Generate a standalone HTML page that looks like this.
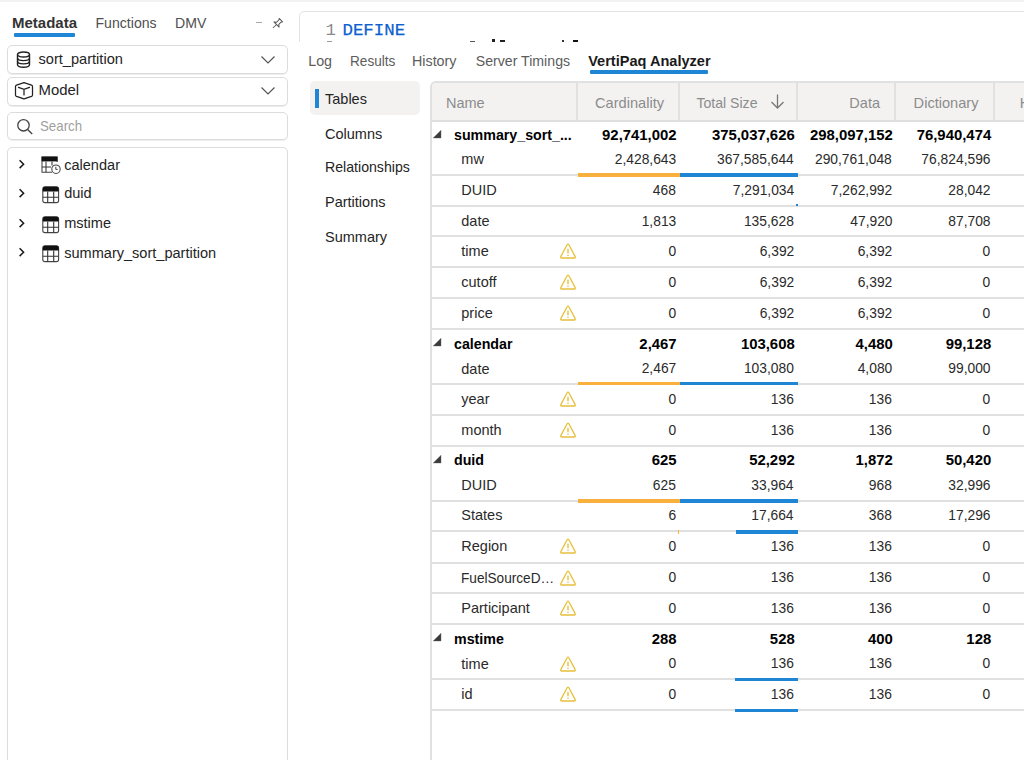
<!DOCTYPE html><html><head><meta charset="utf-8"><style>
html,body{margin:0;padding:0;background:#fff;width:1024px;height:760px;overflow:hidden;position:relative}
.t{position:absolute;white-space:nowrap;font-family:"Liberation Sans",sans-serif}
.r{position:absolute}
svg{position:absolute}
</style></head><body>
<div class="r" style="left:0px;top:0px;width:1024px;height:2px;background:#f3f2f1;"></div>
<div class="t" style="left:12.00px;top:12.80px;font-size:15px;line-height:20px;font-weight:bold;color:#333333;font-family:'Liberation Sans', sans-serif;">Metadata</div>
<div class="r" style="left:14px;top:33px;width:61px;height:3.6px;background:#1f86d6;border-radius:1px"></div>
<div class="t" style="left:95.50px;top:13.11px;font-size:14.1px;line-height:20px;font-weight:normal;color:#505050;font-family:'Liberation Sans', sans-serif;">Functions</div>
<div class="t" style="left:175.00px;top:13.11px;font-size:14.1px;line-height:20px;font-weight:normal;color:#505050;font-family:'Liberation Sans', sans-serif;">DMV</div>
<div class="r" style="left:256px;top:22px;width:6px;height:1px;background:#a8a8a8;"></div>
<svg style="left:268.5px;top:16.3px" width="16" height="16" viewBox="0 0 16 16"><g transform="rotate(45 8 8) translate(8 8) scale(0.86) translate(-8 -8)"><path d="M5.2 1.6 H10.8 L9.8 3.2 V6.8 L12.2 8.8 H3.8 L6.2 6.8 V3.2 Z" fill="none" stroke="#555" stroke-width="1.15" stroke-linejoin="round"/><path d="M8 8.8 V14.6" stroke="#555" stroke-width="1.1"/></g></svg>
<div class="r" style="left:7px;top:45px;width:281px;height:29px;border:1px solid #dcdcdc;border-radius:5px;box-sizing:border-box;box-shadow:0 1px 0 #ededed;"></div>
<div class="r" style="left:7px;top:77px;width:281px;height:29px;border:1px solid #dcdcdc;border-radius:5px;box-sizing:border-box;box-shadow:0 1px 0 #ededed;"></div>
<div class="r" style="left:7px;top:112px;width:281px;height:28px;border:1px solid #dcdcdc;border-radius:5px;box-sizing:border-box;box-shadow:0 1px 0 #ededed;"></div>
<div class="r" style="left:7px;top:147px;width:281px;height:640px;border:1px solid #dcdcdc;border-radius:5px;box-sizing:border-box;box-shadow:0 1px 0 #ededed;"></div>
<svg style="left:260px;top:54.5px" width="16" height="10" viewBox="0 0 16 10"><path d="M1.5 1.5 L8 8 L14.5 1.5" fill="none" stroke="#555" stroke-width="1.2"/></svg>
<svg style="left:260px;top:86px" width="16" height="10" viewBox="0 0 16 10"><path d="M1.5 1.5 L8 8 L14.5 1.5" fill="none" stroke="#555" stroke-width="1.2"/></svg>
<svg style="left:16px;top:50.6px" width="16" height="18" viewBox="0 0 16 18"><ellipse cx="7.5" cy="3.5" rx="6" ry="2.5" fill="none" stroke="#222" stroke-width="1.4"/><path d="M1.5 3.5 V13.5 C1.5 15 4 16.2 7.5 16.2 C11 16.2 13.5 15 13.5 13.5 V3.5" fill="none" stroke="#222" stroke-width="1.4"/><path d="M1.5 7 C1.5 8.5 4 9.6 7.5 9.6 C11 9.6 13.5 8.5 13.5 7" fill="none" stroke="#222" stroke-width="1.4"/><path d="M1.5 10.3 C1.5 11.8 4 12.9 7.5 12.9 C11 12.9 13.5 11.8 13.5 10.3" fill="none" stroke="#222" stroke-width="1.4"/></svg>
<div class="t" style="left:38.50px;top:49.14px;font-size:14.6px;line-height:20px;font-weight:normal;color:#242424;font-family:'Liberation Sans', sans-serif;">sort_partition</div>
<svg style="left:10px;top:76px" width="30" height="28" viewBox="0 0 30 28"><path d="M14 6.6 L21.5 9.2 Q22.5 9.6 22.5 10.6 V19 Q22.5 20 21.5 20.4 L14.8 22.7 Q14 23 13.2 22.7 L6.5 20.4 Q5.5 20 5.5 19 V10.6 Q5.5 9.6 6.5 9.2 Z" fill="none" stroke="#222" stroke-width="1.25" stroke-linejoin="round"/><path d="M8.5 11.3 L14 13.4 L19.5 11.3 M14 13.4 V18.9" fill="none" stroke="#222" stroke-width="1.25" stroke-linecap="round"/></svg>
<div class="t" style="left:38.50px;top:80.44px;font-size:14.9px;line-height:20px;font-weight:normal;color:#242424;font-family:'Liberation Sans', sans-serif;">Model</div>
<svg style="left:16px;top:118px" width="18" height="18" viewBox="0 0 18 18"><circle cx="7.5" cy="7.3" r="5.7" fill="none" stroke="#444" stroke-width="1.3"/><path d="M11.6 11.5 L16.2 16" stroke="#444" stroke-width="1.4"/></svg>
<div class="t" style="left:39.60px;top:116.05px;font-size:14.3px;line-height:20px;font-weight:normal;color:#a0a0a0;font-family:'Liberation Sans', sans-serif;transform:scaleX(0.93);transform-origin:left center;">Search</div>
<svg style="left:17px;top:159.2px" width="10" height="11" viewBox="0 0 10 11"><path d="M2.6 1.3 L6.6 5.2 L2.6 9.1" fill="none" stroke="#1a1a1a" stroke-width="1.5"/></svg>
<svg style="left:40.6px;top:155.5px" width="22" height="20" viewBox="0 0 22 20"><path d="M11 16.2 H1 V1 H16.2 V6" fill="none" stroke="#444" stroke-width="1.05"/><rect x="0.6" y="0.6" width="15.8" height="4.8" fill="#111"/><path d="M0.8 11 H10 M5 5.4 V16.2 M11 5.4 V9.5" stroke="#333" stroke-width="1.05"/><circle cx="15" cy="13.2" r="4.2" fill="#fff" stroke="#444" stroke-width="1.05"/><path d="M14.8 10.8 V13.4 H16.6" fill="none" stroke="#444" stroke-width="1"/></svg>
<div class="t" style="left:64.20px;top:154.66px;font-size:14.55px;line-height:20px;font-weight:normal;color:#242424;font-family:'Liberation Sans', sans-serif;">calendar</div>
<svg style="left:17px;top:188.0px" width="10" height="11" viewBox="0 0 10 11"><path d="M2.6 1.3 L6.6 5.2 L2.6 9.1" fill="none" stroke="#1a1a1a" stroke-width="1.5"/></svg>
<svg style="left:41.8px;top:185.7px" width="18" height="18" viewBox="0 0 18 18"><rect x="0.8" y="0.8" width="15.8" height="15.8" rx="2.2" fill="none" stroke="#444" stroke-width="1.1"/><path d="M0.8 3 Q0.8 0.8 3 0.8 H14.4 Q16.6 0.8 16.6 3 V5.6 H0.8 Z" fill="#111"/><path d="M0.8 11.2 H16.6 M5.7 5.6 V16.6 M11.7 5.6 V16.6" stroke="#333" stroke-width="1.1"/></svg>
<div class="t" style="left:64.20px;top:183.46px;font-size:14.55px;line-height:20px;font-weight:normal;color:#242424;font-family:'Liberation Sans', sans-serif;">duid</div>
<svg style="left:17px;top:217.8px" width="10" height="11" viewBox="0 0 10 11"><path d="M2.6 1.3 L6.6 5.2 L2.6 9.1" fill="none" stroke="#1a1a1a" stroke-width="1.5"/></svg>
<svg style="left:41.8px;top:215.5px" width="18" height="18" viewBox="0 0 18 18"><rect x="0.8" y="0.8" width="15.8" height="15.8" rx="2.2" fill="none" stroke="#444" stroke-width="1.1"/><path d="M0.8 3 Q0.8 0.8 3 0.8 H14.4 Q16.6 0.8 16.6 3 V5.6 H0.8 Z" fill="#111"/><path d="M0.8 11.2 H16.6 M5.7 5.6 V16.6 M11.7 5.6 V16.6" stroke="#333" stroke-width="1.1"/></svg>
<div class="t" style="left:64.20px;top:213.26px;font-size:14.55px;line-height:20px;font-weight:normal;color:#242424;font-family:'Liberation Sans', sans-serif;">mstime</div>
<svg style="left:17px;top:247.2px" width="10" height="11" viewBox="0 0 10 11"><path d="M2.6 1.3 L6.6 5.2 L2.6 9.1" fill="none" stroke="#1a1a1a" stroke-width="1.5"/></svg>
<svg style="left:41.8px;top:244.89999999999998px" width="18" height="18" viewBox="0 0 18 18"><rect x="0.8" y="0.8" width="15.8" height="15.8" rx="2.2" fill="none" stroke="#444" stroke-width="1.1"/><path d="M0.8 3 Q0.8 0.8 3 0.8 H14.4 Q16.6 0.8 16.6 3 V5.6 H0.8 Z" fill="#111"/><path d="M0.8 11.2 H16.6 M5.7 5.6 V16.6 M11.7 5.6 V16.6" stroke="#333" stroke-width="1.1"/></svg>
<div class="t" style="left:64.20px;top:242.66px;font-size:14.55px;line-height:20px;font-weight:normal;color:#242424;font-family:'Liberation Sans', sans-serif;">summary_sort_partition</div>
<div class="r" style="left:299px;top:11px;width:760px;height:60px;border:1px solid #e3e3e3;border-radius:5px;box-sizing:border-box"></div>
<div class="r" style="left:290px;top:42px;width:734px;height:718px;background:#fff;"></div>
<div class="t" style="left:325.50px;top:21.27px;font-size:17.4px;line-height:20px;font-weight:normal;color:#8a8a8a;font-family:'Liberation Mono', monospace;">1</div>
<div class="t" style="left:342.50px;top:21.27px;font-size:17.4px;line-height:20px;font-weight:normal;color:#0d5fd0;font-family:'Liberation Mono', monospace;-webkit-text-stroke:0.25px #0d5fd0;">DEFINE</div>
<div class="r" style="left:327px;top:41px;width:5px;height:1px;background:#9a9a9a;"></div>
<div class="r" style="left:470px;top:41px;width:5px;height:1px;background:#555;"></div>
<div class="r" style="left:492px;top:39px;width:3px;height:3px;background:#222;"></div>
<div class="r" style="left:500px;top:40px;width:5px;height:2px;background:#222;"></div>
<div class="r" style="left:561.5px;top:40px;width:2px;height:2px;background:#333;"></div>
<div class="r" style="left:573px;top:40px;width:5px;height:2px;background:#111;"></div>
<div class="t" style="left:308.20px;top:51.45px;font-size:14.3px;line-height:20px;font-weight:normal;color:#5c5c5c;font-family:'Liberation Sans', sans-serif;">Log</div>
<div class="t" style="left:349.50px;top:51.41px;font-size:14.4px;line-height:20px;font-weight:normal;color:#5c5c5c;font-family:'Liberation Sans', sans-serif;transform:scaleX(0.945);transform-origin:left center;">Results</div>
<div class="t" style="left:412.00px;top:51.45px;font-size:14.3px;line-height:20px;font-weight:normal;color:#5c5c5c;font-family:'Liberation Sans', sans-serif;">History</div>
<div class="t" style="left:475.70px;top:51.49px;font-size:14.16px;line-height:20px;font-weight:normal;color:#5c5c5c;font-family:'Liberation Sans', sans-serif;">Server Timings</div>
<div class="t" style="left:588.20px;top:51.35px;font-size:14.56px;line-height:20px;font-weight:bold;color:#1a1a1a;font-family:'Liberation Sans', sans-serif;">VertiPaq Analyzer</div>
<div class="r" style="left:590px;top:70px;width:118px;height:3.6px;background:#1f86d6;border-radius:1px"></div>
<div class="r" style="left:310px;top:81px;width:110px;height:34px;background:#f3f2f1;border-radius:5px"></div>
<div class="r" style="left:315px;top:88.5px;width:3.5px;height:19px;background:#1f86d6;"></div>
<div class="t" style="left:325.00px;top:88.98px;font-size:14.5px;line-height:20px;font-weight:normal;color:#242424;font-family:'Liberation Sans', sans-serif;">Tables</div>
<div class="t" style="left:325.00px;top:123.58px;font-size:14.5px;line-height:20px;font-weight:normal;color:#242424;font-family:'Liberation Sans', sans-serif;">Columns</div>
<div class="t" style="left:325.00px;top:157.48px;font-size:14.5px;line-height:20px;font-weight:normal;color:#242424;font-family:'Liberation Sans', sans-serif;transform:scaleX(0.975);transform-origin:left center;">Relationships</div>
<div class="t" style="left:325.00px;top:192.18px;font-size:14.5px;line-height:20px;font-weight:normal;color:#242424;font-family:'Liberation Sans', sans-serif;">Partitions</div>
<div class="t" style="left:325.00px;top:226.78px;font-size:14.5px;line-height:20px;font-weight:normal;color:#242424;font-family:'Liberation Sans', sans-serif;">Summary</div>
<div class="r" style="left:430px;top:81px;width:700px;height:800px;border:2px solid #e1e1e1;border-radius:6px;box-sizing:border-box;background:#fff"></div>
<div class="r" style="left:432px;top:83px;width:600px;height:37px;background:#f3f2f1;border-top-left-radius:4px"></div>
<div class="r" style="left:432px;top:120px;width:600px;height:2px;background:#dedede;"></div>
<div class="r" style="left:576px;top:83px;width:2px;height:37px;background:#e2e1e0;"></div>
<div class="r" style="left:678px;top:83px;width:2px;height:37px;background:#e2e1e0;"></div>
<div class="r" style="left:796px;top:83px;width:2px;height:37px;background:#e2e1e0;"></div>
<div class="r" style="left:894px;top:83px;width:2px;height:37px;background:#e2e1e0;"></div>
<div class="r" style="left:993px;top:83px;width:2px;height:37px;background:#e2e1e0;"></div>
<div class="t" style="left:446.00px;top:92.98px;font-size:14.5px;line-height:20px;font-weight:normal;color:#8c8c8c;font-family:'Liberation Sans', sans-serif;">Name</div>
<div class="t" style="right:360.00px;top:92.94px;font-size:14.6px;line-height:20px;font-weight:normal;color:#8c8c8c;font-family:'Liberation Sans', sans-serif;text-align:right;">Cardinality</div>
<div class="t" style="right:266.50px;top:93.11px;font-size:14.1px;line-height:20px;font-weight:normal;color:#8c8c8c;font-family:'Liberation Sans', sans-serif;text-align:right;">Total Size</div>
<svg style="left:769px;top:93px" width="17" height="17" viewBox="0 0 17 17"><path d="M8.5 1.5 V15 M2.5 9 L8.5 15 L14.5 9" fill="none" stroke="#777" stroke-width="1.3"/></svg>
<div class="t" style="right:144.00px;top:92.98px;font-size:14.5px;line-height:20px;font-weight:normal;color:#8c8c8c;font-family:'Liberation Sans', sans-serif;text-align:right;">Data</div>
<div class="t" style="right:45.50px;top:92.94px;font-size:14.6px;line-height:20px;font-weight:normal;color:#8c8c8c;font-family:'Liberation Sans', sans-serif;text-align:right;">Dictionary</div>
<div class="t" style="left:1019.70px;top:92.98px;font-size:14.5px;line-height:20px;font-weight:normal;color:#8c8c8c;font-family:'Liberation Sans', sans-serif;">H</div>
<svg style="left:432px;top:128.5px" width="10" height="10" viewBox="0 0 10 10"><path d="M9 1.2 L9 9 L1.2 9 Z" fill="#3a3a3a" stroke="#666" stroke-width="0.4" stroke-linejoin="round"/></svg>
<div class="t" style="left:453.90px;top:124.54px;font-size:14.9px;line-height:20px;font-weight:bold;color:#000;font-family:'Liberation Sans', sans-serif;transform:scaleX(0.955);transform-origin:left center;">summary_sort_...</div>
<div class="t" style="right:347.40px;top:124.54px;font-size:14.9px;line-height:20px;font-weight:bold;color:#000;font-family:'Liberation Sans', sans-serif;text-align:right;">92,741,002</div>
<div class="t" style="right:229.30px;top:124.54px;font-size:14.9px;line-height:20px;font-weight:bold;color:#000;font-family:'Liberation Sans', sans-serif;text-align:right;">375,037,626</div>
<div class="t" style="right:131.20px;top:124.54px;font-size:14.9px;line-height:20px;font-weight:bold;color:#000;font-family:'Liberation Sans', sans-serif;text-align:right;">298,097,152</div>
<div class="t" style="right:32.80px;top:124.54px;font-size:14.9px;line-height:20px;font-weight:bold;color:#000;font-family:'Liberation Sans', sans-serif;text-align:right;">76,940,474</div>
<div class="t" style="left:461.30px;top:149.48px;font-size:14.5px;line-height:20px;font-weight:normal;color:#2a2a2a;font-family:'Liberation Sans', sans-serif;">mw</div>
<div class="t" style="right:348.10px;top:149.34px;font-size:14.9px;line-height:20px;font-weight:normal;color:#2a2a2a;font-family:'Liberation Sans', sans-serif;text-align:right;transform:scaleX(0.928);transform-origin:right center;">2,428,643</div>
<div class="t" style="right:230.00px;top:149.34px;font-size:14.9px;line-height:20px;font-weight:normal;color:#2a2a2a;font-family:'Liberation Sans', sans-serif;text-align:right;transform:scaleX(0.928);transform-origin:right center;">367,585,644</div>
<div class="t" style="right:131.90px;top:149.34px;font-size:14.9px;line-height:20px;font-weight:normal;color:#2a2a2a;font-family:'Liberation Sans', sans-serif;text-align:right;transform:scaleX(0.928);transform-origin:right center;">290,761,048</div>
<div class="t" style="right:33.50px;top:149.34px;font-size:14.9px;line-height:20px;font-weight:normal;color:#2a2a2a;font-family:'Liberation Sans', sans-serif;text-align:right;transform:scaleX(0.928);transform-origin:right center;">76,824,596</div>
<div class="r" style="left:432px;top:174px;width:600px;height:2px;background:#e0e0e0;"></div>
<div class="t" style="left:461.30px;top:179.68px;font-size:14.5px;line-height:20px;font-weight:normal;color:#2a2a2a;font-family:'Liberation Sans', sans-serif;">DUID</div>
<div class="t" style="right:348.10px;top:179.54px;font-size:14.9px;line-height:20px;font-weight:normal;color:#2a2a2a;font-family:'Liberation Sans', sans-serif;text-align:right;transform:scaleX(0.928);transform-origin:right center;">468</div>
<div class="t" style="right:230.00px;top:179.54px;font-size:14.9px;line-height:20px;font-weight:normal;color:#2a2a2a;font-family:'Liberation Sans', sans-serif;text-align:right;transform:scaleX(0.928);transform-origin:right center;">7,291,034</div>
<div class="t" style="right:131.90px;top:179.54px;font-size:14.9px;line-height:20px;font-weight:normal;color:#2a2a2a;font-family:'Liberation Sans', sans-serif;text-align:right;transform:scaleX(0.928);transform-origin:right center;">7,262,992</div>
<div class="t" style="right:33.50px;top:179.54px;font-size:14.9px;line-height:20px;font-weight:normal;color:#2a2a2a;font-family:'Liberation Sans', sans-serif;text-align:right;transform:scaleX(0.928);transform-origin:right center;">28,042</div>
<div class="r" style="left:432px;top:205px;width:600px;height:2px;background:#e0e0e0;"></div>
<div class="t" style="left:461.30px;top:210.68px;font-size:14.5px;line-height:20px;font-weight:normal;color:#2a2a2a;font-family:'Liberation Sans', sans-serif;">date</div>
<div class="t" style="right:348.10px;top:210.54px;font-size:14.9px;line-height:20px;font-weight:normal;color:#2a2a2a;font-family:'Liberation Sans', sans-serif;text-align:right;transform:scaleX(0.928);transform-origin:right center;">1,813</div>
<div class="t" style="right:230.00px;top:210.54px;font-size:14.9px;line-height:20px;font-weight:normal;color:#2a2a2a;font-family:'Liberation Sans', sans-serif;text-align:right;transform:scaleX(0.928);transform-origin:right center;">135,628</div>
<div class="t" style="right:131.90px;top:210.54px;font-size:14.9px;line-height:20px;font-weight:normal;color:#2a2a2a;font-family:'Liberation Sans', sans-serif;text-align:right;transform:scaleX(0.928);transform-origin:right center;">47,920</div>
<div class="t" style="right:33.50px;top:210.54px;font-size:14.9px;line-height:20px;font-weight:normal;color:#2a2a2a;font-family:'Liberation Sans', sans-serif;text-align:right;transform:scaleX(0.928);transform-origin:right center;">87,708</div>
<div class="r" style="left:432px;top:235px;width:600px;height:2px;background:#e0e0e0;"></div>
<div class="t" style="left:461.30px;top:241.18px;font-size:14.5px;line-height:20px;font-weight:normal;color:#2a2a2a;font-family:'Liberation Sans', sans-serif;">time</div>
<svg style="left:559px;top:242px" width="18" height="18" viewBox="0 0 18 18"><path d="M9 2.2 C8.6 2.2 8.3 2.4 8.1 2.8 L1.8 14.6 C1.4 15.3 1.9 16 2.6 16 H15.4 C16.1 16 16.6 15.3 16.2 14.6 L9.9 2.8 C9.7 2.4 9.4 2.2 9 2.2 Z" fill="none" stroke="#e6c03c" stroke-width="1.3"/><path d="M9 6.8 V11.3" stroke="#e6c03c" stroke-width="1.4"/><circle cx="9" cy="13.3" r="0.8" fill="#e6c03c"/></svg>
<div class="t" style="right:348.10px;top:241.04px;font-size:14.9px;line-height:20px;font-weight:normal;color:#2a2a2a;font-family:'Liberation Sans', sans-serif;text-align:right;transform:scaleX(0.928);transform-origin:right center;">0</div>
<div class="t" style="right:230.00px;top:241.04px;font-size:14.9px;line-height:20px;font-weight:normal;color:#2a2a2a;font-family:'Liberation Sans', sans-serif;text-align:right;transform:scaleX(0.928);transform-origin:right center;">6,392</div>
<div class="t" style="right:131.90px;top:241.04px;font-size:14.9px;line-height:20px;font-weight:normal;color:#2a2a2a;font-family:'Liberation Sans', sans-serif;text-align:right;transform:scaleX(0.928);transform-origin:right center;">6,392</div>
<div class="t" style="right:33.50px;top:241.04px;font-size:14.9px;line-height:20px;font-weight:normal;color:#2a2a2a;font-family:'Liberation Sans', sans-serif;text-align:right;transform:scaleX(0.928);transform-origin:right center;">0</div>
<div class="r" style="left:432px;top:266px;width:600px;height:2px;background:#e0e0e0;"></div>
<div class="t" style="left:461.30px;top:272.18px;font-size:14.5px;line-height:20px;font-weight:normal;color:#2a2a2a;font-family:'Liberation Sans', sans-serif;">cutoff</div>
<svg style="left:559px;top:273px" width="18" height="18" viewBox="0 0 18 18"><path d="M9 2.2 C8.6 2.2 8.3 2.4 8.1 2.8 L1.8 14.6 C1.4 15.3 1.9 16 2.6 16 H15.4 C16.1 16 16.6 15.3 16.2 14.6 L9.9 2.8 C9.7 2.4 9.4 2.2 9 2.2 Z" fill="none" stroke="#e6c03c" stroke-width="1.3"/><path d="M9 6.8 V11.3" stroke="#e6c03c" stroke-width="1.4"/><circle cx="9" cy="13.3" r="0.8" fill="#e6c03c"/></svg>
<div class="t" style="right:348.10px;top:272.04px;font-size:14.9px;line-height:20px;font-weight:normal;color:#2a2a2a;font-family:'Liberation Sans', sans-serif;text-align:right;transform:scaleX(0.928);transform-origin:right center;">0</div>
<div class="t" style="right:230.00px;top:272.04px;font-size:14.9px;line-height:20px;font-weight:normal;color:#2a2a2a;font-family:'Liberation Sans', sans-serif;text-align:right;transform:scaleX(0.928);transform-origin:right center;">6,392</div>
<div class="t" style="right:131.90px;top:272.04px;font-size:14.9px;line-height:20px;font-weight:normal;color:#2a2a2a;font-family:'Liberation Sans', sans-serif;text-align:right;transform:scaleX(0.928);transform-origin:right center;">6,392</div>
<div class="t" style="right:33.50px;top:272.04px;font-size:14.9px;line-height:20px;font-weight:normal;color:#2a2a2a;font-family:'Liberation Sans', sans-serif;text-align:right;transform:scaleX(0.928);transform-origin:right center;">0</div>
<div class="r" style="left:432px;top:297px;width:600px;height:2px;background:#e0e0e0;"></div>
<div class="t" style="left:461.30px;top:302.78px;font-size:14.5px;line-height:20px;font-weight:normal;color:#2a2a2a;font-family:'Liberation Sans', sans-serif;">price</div>
<svg style="left:559px;top:303.6px" width="18" height="18" viewBox="0 0 18 18"><path d="M9 2.2 C8.6 2.2 8.3 2.4 8.1 2.8 L1.8 14.6 C1.4 15.3 1.9 16 2.6 16 H15.4 C16.1 16 16.6 15.3 16.2 14.6 L9.9 2.8 C9.7 2.4 9.4 2.2 9 2.2 Z" fill="none" stroke="#e6c03c" stroke-width="1.3"/><path d="M9 6.8 V11.3" stroke="#e6c03c" stroke-width="1.4"/><circle cx="9" cy="13.3" r="0.8" fill="#e6c03c"/></svg>
<div class="t" style="right:348.10px;top:302.64px;font-size:14.9px;line-height:20px;font-weight:normal;color:#2a2a2a;font-family:'Liberation Sans', sans-serif;text-align:right;transform:scaleX(0.928);transform-origin:right center;">0</div>
<div class="t" style="right:230.00px;top:302.64px;font-size:14.9px;line-height:20px;font-weight:normal;color:#2a2a2a;font-family:'Liberation Sans', sans-serif;text-align:right;transform:scaleX(0.928);transform-origin:right center;">6,392</div>
<div class="t" style="right:131.90px;top:302.64px;font-size:14.9px;line-height:20px;font-weight:normal;color:#2a2a2a;font-family:'Liberation Sans', sans-serif;text-align:right;transform:scaleX(0.928);transform-origin:right center;">6,392</div>
<div class="t" style="right:33.50px;top:302.64px;font-size:14.9px;line-height:20px;font-weight:normal;color:#2a2a2a;font-family:'Liberation Sans', sans-serif;text-align:right;transform:scaleX(0.928);transform-origin:right center;">0</div>
<div class="r" style="left:432px;top:328px;width:600px;height:2px;background:#e0e0e0;"></div>
<svg style="left:432px;top:337px" width="10" height="10" viewBox="0 0 10 10"><path d="M9 1.2 L9 9 L1.2 9 Z" fill="#3a3a3a" stroke="#666" stroke-width="0.4" stroke-linejoin="round"/></svg>
<div class="t" style="left:453.90px;top:333.74px;font-size:14.9px;line-height:20px;font-weight:bold;color:#000;font-family:'Liberation Sans', sans-serif;transform:scaleX(0.955);transform-origin:left center;">calendar</div>
<div class="t" style="right:347.40px;top:333.74px;font-size:14.9px;line-height:20px;font-weight:bold;color:#000;font-family:'Liberation Sans', sans-serif;text-align:right;">2,467</div>
<div class="t" style="right:229.30px;top:333.74px;font-size:14.9px;line-height:20px;font-weight:bold;color:#000;font-family:'Liberation Sans', sans-serif;text-align:right;">103,608</div>
<div class="t" style="right:131.20px;top:333.74px;font-size:14.9px;line-height:20px;font-weight:bold;color:#000;font-family:'Liberation Sans', sans-serif;text-align:right;">4,480</div>
<div class="t" style="right:32.80px;top:333.74px;font-size:14.9px;line-height:20px;font-weight:bold;color:#000;font-family:'Liberation Sans', sans-serif;text-align:right;">99,128</div>
<div class="t" style="left:461.30px;top:358.58px;font-size:14.5px;line-height:20px;font-weight:normal;color:#2a2a2a;font-family:'Liberation Sans', sans-serif;">date</div>
<div class="t" style="right:348.10px;top:358.44px;font-size:14.9px;line-height:20px;font-weight:normal;color:#2a2a2a;font-family:'Liberation Sans', sans-serif;text-align:right;transform:scaleX(0.928);transform-origin:right center;">2,467</div>
<div class="t" style="right:230.00px;top:358.44px;font-size:14.9px;line-height:20px;font-weight:normal;color:#2a2a2a;font-family:'Liberation Sans', sans-serif;text-align:right;transform:scaleX(0.928);transform-origin:right center;">103,080</div>
<div class="t" style="right:131.90px;top:358.44px;font-size:14.9px;line-height:20px;font-weight:normal;color:#2a2a2a;font-family:'Liberation Sans', sans-serif;text-align:right;transform:scaleX(0.928);transform-origin:right center;">4,080</div>
<div class="t" style="right:33.50px;top:358.44px;font-size:14.9px;line-height:20px;font-weight:normal;color:#2a2a2a;font-family:'Liberation Sans', sans-serif;text-align:right;transform:scaleX(0.928);transform-origin:right center;">99,000</div>
<div class="r" style="left:432px;top:383px;width:600px;height:2px;background:#e0e0e0;"></div>
<div class="t" style="left:461.30px;top:388.98px;font-size:14.5px;line-height:20px;font-weight:normal;color:#2a2a2a;font-family:'Liberation Sans', sans-serif;">year</div>
<svg style="left:559px;top:390px" width="18" height="18" viewBox="0 0 18 18"><path d="M9 2.2 C8.6 2.2 8.3 2.4 8.1 2.8 L1.8 14.6 C1.4 15.3 1.9 16 2.6 16 H15.4 C16.1 16 16.6 15.3 16.2 14.6 L9.9 2.8 C9.7 2.4 9.4 2.2 9 2.2 Z" fill="none" stroke="#e6c03c" stroke-width="1.3"/><path d="M9 6.8 V11.3" stroke="#e6c03c" stroke-width="1.4"/><circle cx="9" cy="13.3" r="0.8" fill="#e6c03c"/></svg>
<div class="t" style="right:348.10px;top:388.84px;font-size:14.9px;line-height:20px;font-weight:normal;color:#2a2a2a;font-family:'Liberation Sans', sans-serif;text-align:right;transform:scaleX(0.928);transform-origin:right center;">0</div>
<div class="t" style="right:230.00px;top:388.84px;font-size:14.9px;line-height:20px;font-weight:normal;color:#2a2a2a;font-family:'Liberation Sans', sans-serif;text-align:right;transform:scaleX(0.928);transform-origin:right center;">136</div>
<div class="t" style="right:131.90px;top:388.84px;font-size:14.9px;line-height:20px;font-weight:normal;color:#2a2a2a;font-family:'Liberation Sans', sans-serif;text-align:right;transform:scaleX(0.928);transform-origin:right center;">136</div>
<div class="t" style="right:33.50px;top:388.84px;font-size:14.9px;line-height:20px;font-weight:normal;color:#2a2a2a;font-family:'Liberation Sans', sans-serif;text-align:right;transform:scaleX(0.928);transform-origin:right center;">0</div>
<div class="r" style="left:432px;top:414px;width:600px;height:2px;background:#e0e0e0;"></div>
<div class="t" style="left:461.30px;top:419.98px;font-size:14.5px;line-height:20px;font-weight:normal;color:#2a2a2a;font-family:'Liberation Sans', sans-serif;">month</div>
<svg style="left:559px;top:421px" width="18" height="18" viewBox="0 0 18 18"><path d="M9 2.2 C8.6 2.2 8.3 2.4 8.1 2.8 L1.8 14.6 C1.4 15.3 1.9 16 2.6 16 H15.4 C16.1 16 16.6 15.3 16.2 14.6 L9.9 2.8 C9.7 2.4 9.4 2.2 9 2.2 Z" fill="none" stroke="#e6c03c" stroke-width="1.3"/><path d="M9 6.8 V11.3" stroke="#e6c03c" stroke-width="1.4"/><circle cx="9" cy="13.3" r="0.8" fill="#e6c03c"/></svg>
<div class="t" style="right:348.10px;top:419.84px;font-size:14.9px;line-height:20px;font-weight:normal;color:#2a2a2a;font-family:'Liberation Sans', sans-serif;text-align:right;transform:scaleX(0.928);transform-origin:right center;">0</div>
<div class="t" style="right:230.00px;top:419.84px;font-size:14.9px;line-height:20px;font-weight:normal;color:#2a2a2a;font-family:'Liberation Sans', sans-serif;text-align:right;transform:scaleX(0.928);transform-origin:right center;">136</div>
<div class="t" style="right:131.90px;top:419.84px;font-size:14.9px;line-height:20px;font-weight:normal;color:#2a2a2a;font-family:'Liberation Sans', sans-serif;text-align:right;transform:scaleX(0.928);transform-origin:right center;">136</div>
<div class="t" style="right:33.50px;top:419.84px;font-size:14.9px;line-height:20px;font-weight:normal;color:#2a2a2a;font-family:'Liberation Sans', sans-serif;text-align:right;transform:scaleX(0.928);transform-origin:right center;">0</div>
<div class="r" style="left:432px;top:445px;width:600px;height:2px;background:#e0e0e0;"></div>
<svg style="left:432px;top:453.5px" width="10" height="10" viewBox="0 0 10 10"><path d="M9 1.2 L9 9 L1.2 9 Z" fill="#3a3a3a" stroke="#666" stroke-width="0.4" stroke-linejoin="round"/></svg>
<div class="t" style="left:453.90px;top:450.24px;font-size:14.9px;line-height:20px;font-weight:bold;color:#000;font-family:'Liberation Sans', sans-serif;transform:scaleX(0.955);transform-origin:left center;">duid</div>
<div class="t" style="right:347.40px;top:450.24px;font-size:14.9px;line-height:20px;font-weight:bold;color:#000;font-family:'Liberation Sans', sans-serif;text-align:right;">625</div>
<div class="t" style="right:229.30px;top:450.24px;font-size:14.9px;line-height:20px;font-weight:bold;color:#000;font-family:'Liberation Sans', sans-serif;text-align:right;">52,292</div>
<div class="t" style="right:131.20px;top:450.24px;font-size:14.9px;line-height:20px;font-weight:bold;color:#000;font-family:'Liberation Sans', sans-serif;text-align:right;">1,872</div>
<div class="t" style="right:32.80px;top:450.24px;font-size:14.9px;line-height:20px;font-weight:bold;color:#000;font-family:'Liberation Sans', sans-serif;text-align:right;">50,420</div>
<div class="t" style="left:461.30px;top:475.08px;font-size:14.5px;line-height:20px;font-weight:normal;color:#2a2a2a;font-family:'Liberation Sans', sans-serif;">DUID</div>
<div class="t" style="right:348.10px;top:474.94px;font-size:14.9px;line-height:20px;font-weight:normal;color:#2a2a2a;font-family:'Liberation Sans', sans-serif;text-align:right;transform:scaleX(0.928);transform-origin:right center;">625</div>
<div class="t" style="right:230.00px;top:474.94px;font-size:14.9px;line-height:20px;font-weight:normal;color:#2a2a2a;font-family:'Liberation Sans', sans-serif;text-align:right;transform:scaleX(0.928);transform-origin:right center;">33,964</div>
<div class="t" style="right:131.90px;top:474.94px;font-size:14.9px;line-height:20px;font-weight:normal;color:#2a2a2a;font-family:'Liberation Sans', sans-serif;text-align:right;transform:scaleX(0.928);transform-origin:right center;">968</div>
<div class="t" style="right:33.50px;top:474.94px;font-size:14.9px;line-height:20px;font-weight:normal;color:#2a2a2a;font-family:'Liberation Sans', sans-serif;text-align:right;transform:scaleX(0.928);transform-origin:right center;">32,996</div>
<div class="r" style="left:432px;top:500px;width:600px;height:2px;background:#e0e0e0;"></div>
<div class="t" style="left:461.30px;top:505.48px;font-size:14.5px;line-height:20px;font-weight:normal;color:#2a2a2a;font-family:'Liberation Sans', sans-serif;">States</div>
<div class="t" style="right:348.10px;top:505.34px;font-size:14.9px;line-height:20px;font-weight:normal;color:#2a2a2a;font-family:'Liberation Sans', sans-serif;text-align:right;transform:scaleX(0.928);transform-origin:right center;">6</div>
<div class="t" style="right:230.00px;top:505.34px;font-size:14.9px;line-height:20px;font-weight:normal;color:#2a2a2a;font-family:'Liberation Sans', sans-serif;text-align:right;transform:scaleX(0.928);transform-origin:right center;">17,664</div>
<div class="t" style="right:131.90px;top:505.34px;font-size:14.9px;line-height:20px;font-weight:normal;color:#2a2a2a;font-family:'Liberation Sans', sans-serif;text-align:right;transform:scaleX(0.928);transform-origin:right center;">368</div>
<div class="t" style="right:33.50px;top:505.34px;font-size:14.9px;line-height:20px;font-weight:normal;color:#2a2a2a;font-family:'Liberation Sans', sans-serif;text-align:right;transform:scaleX(0.928);transform-origin:right center;">17,296</div>
<div class="r" style="left:432px;top:530px;width:600px;height:2px;background:#e0e0e0;"></div>
<div class="t" style="left:461.30px;top:536.28px;font-size:14.5px;line-height:20px;font-weight:normal;color:#2a2a2a;font-family:'Liberation Sans', sans-serif;">Region</div>
<svg style="left:559px;top:537.3px" width="18" height="18" viewBox="0 0 18 18"><path d="M9 2.2 C8.6 2.2 8.3 2.4 8.1 2.8 L1.8 14.6 C1.4 15.3 1.9 16 2.6 16 H15.4 C16.1 16 16.6 15.3 16.2 14.6 L9.9 2.8 C9.7 2.4 9.4 2.2 9 2.2 Z" fill="none" stroke="#e6c03c" stroke-width="1.3"/><path d="M9 6.8 V11.3" stroke="#e6c03c" stroke-width="1.4"/><circle cx="9" cy="13.3" r="0.8" fill="#e6c03c"/></svg>
<div class="t" style="right:348.10px;top:536.14px;font-size:14.9px;line-height:20px;font-weight:normal;color:#2a2a2a;font-family:'Liberation Sans', sans-serif;text-align:right;transform:scaleX(0.928);transform-origin:right center;">0</div>
<div class="t" style="right:230.00px;top:536.14px;font-size:14.9px;line-height:20px;font-weight:normal;color:#2a2a2a;font-family:'Liberation Sans', sans-serif;text-align:right;transform:scaleX(0.928);transform-origin:right center;">136</div>
<div class="t" style="right:131.90px;top:536.14px;font-size:14.9px;line-height:20px;font-weight:normal;color:#2a2a2a;font-family:'Liberation Sans', sans-serif;text-align:right;transform:scaleX(0.928);transform-origin:right center;">136</div>
<div class="t" style="right:33.50px;top:536.14px;font-size:14.9px;line-height:20px;font-weight:normal;color:#2a2a2a;font-family:'Liberation Sans', sans-serif;text-align:right;transform:scaleX(0.928);transform-origin:right center;">0</div>
<div class="r" style="left:432px;top:562px;width:600px;height:2px;background:#e0e0e0;"></div>
<div class="t" style="left:461.30px;top:567.58px;font-size:14.5px;line-height:20px;font-weight:normal;color:#2a2a2a;font-family:'Liberation Sans', sans-serif;transform:scaleX(0.94);transform-origin:left center;">FuelSourceD…</div>
<svg style="left:559px;top:568.6px" width="18" height="18" viewBox="0 0 18 18"><path d="M9 2.2 C8.6 2.2 8.3 2.4 8.1 2.8 L1.8 14.6 C1.4 15.3 1.9 16 2.6 16 H15.4 C16.1 16 16.6 15.3 16.2 14.6 L9.9 2.8 C9.7 2.4 9.4 2.2 9 2.2 Z" fill="none" stroke="#e6c03c" stroke-width="1.3"/><path d="M9 6.8 V11.3" stroke="#e6c03c" stroke-width="1.4"/><circle cx="9" cy="13.3" r="0.8" fill="#e6c03c"/></svg>
<div class="t" style="right:348.10px;top:567.44px;font-size:14.9px;line-height:20px;font-weight:normal;color:#2a2a2a;font-family:'Liberation Sans', sans-serif;text-align:right;transform:scaleX(0.928);transform-origin:right center;">0</div>
<div class="t" style="right:230.00px;top:567.44px;font-size:14.9px;line-height:20px;font-weight:normal;color:#2a2a2a;font-family:'Liberation Sans', sans-serif;text-align:right;transform:scaleX(0.928);transform-origin:right center;">136</div>
<div class="t" style="right:131.90px;top:567.44px;font-size:14.9px;line-height:20px;font-weight:normal;color:#2a2a2a;font-family:'Liberation Sans', sans-serif;text-align:right;transform:scaleX(0.928);transform-origin:right center;">136</div>
<div class="t" style="right:33.50px;top:567.44px;font-size:14.9px;line-height:20px;font-weight:normal;color:#2a2a2a;font-family:'Liberation Sans', sans-serif;text-align:right;transform:scaleX(0.928);transform-origin:right center;">0</div>
<div class="r" style="left:432px;top:592px;width:600px;height:2px;background:#e0e0e0;"></div>
<div class="t" style="left:461.30px;top:597.98px;font-size:14.5px;line-height:20px;font-weight:normal;color:#2a2a2a;font-family:'Liberation Sans', sans-serif;">Participant</div>
<svg style="left:559px;top:599px" width="18" height="18" viewBox="0 0 18 18"><path d="M9 2.2 C8.6 2.2 8.3 2.4 8.1 2.8 L1.8 14.6 C1.4 15.3 1.9 16 2.6 16 H15.4 C16.1 16 16.6 15.3 16.2 14.6 L9.9 2.8 C9.7 2.4 9.4 2.2 9 2.2 Z" fill="none" stroke="#e6c03c" stroke-width="1.3"/><path d="M9 6.8 V11.3" stroke="#e6c03c" stroke-width="1.4"/><circle cx="9" cy="13.3" r="0.8" fill="#e6c03c"/></svg>
<div class="t" style="right:348.10px;top:597.84px;font-size:14.9px;line-height:20px;font-weight:normal;color:#2a2a2a;font-family:'Liberation Sans', sans-serif;text-align:right;transform:scaleX(0.928);transform-origin:right center;">0</div>
<div class="t" style="right:230.00px;top:597.84px;font-size:14.9px;line-height:20px;font-weight:normal;color:#2a2a2a;font-family:'Liberation Sans', sans-serif;text-align:right;transform:scaleX(0.928);transform-origin:right center;">136</div>
<div class="t" style="right:131.90px;top:597.84px;font-size:14.9px;line-height:20px;font-weight:normal;color:#2a2a2a;font-family:'Liberation Sans', sans-serif;text-align:right;transform:scaleX(0.928);transform-origin:right center;">136</div>
<div class="t" style="right:33.50px;top:597.84px;font-size:14.9px;line-height:20px;font-weight:normal;color:#2a2a2a;font-family:'Liberation Sans', sans-serif;text-align:right;transform:scaleX(0.928);transform-origin:right center;">0</div>
<div class="r" style="left:432px;top:623px;width:600px;height:2px;background:#e0e0e0;"></div>
<svg style="left:432px;top:632px" width="10" height="10" viewBox="0 0 10 10"><path d="M9 1.2 L9 9 L1.2 9 Z" fill="#3a3a3a" stroke="#666" stroke-width="0.4" stroke-linejoin="round"/></svg>
<div class="t" style="left:453.90px;top:628.74px;font-size:14.9px;line-height:20px;font-weight:bold;color:#000;font-family:'Liberation Sans', sans-serif;transform:scaleX(0.955);transform-origin:left center;">mstime</div>
<div class="t" style="right:347.40px;top:628.74px;font-size:14.9px;line-height:20px;font-weight:bold;color:#000;font-family:'Liberation Sans', sans-serif;text-align:right;">288</div>
<div class="t" style="right:229.30px;top:628.74px;font-size:14.9px;line-height:20px;font-weight:bold;color:#000;font-family:'Liberation Sans', sans-serif;text-align:right;">528</div>
<div class="t" style="right:131.20px;top:628.74px;font-size:14.9px;line-height:20px;font-weight:bold;color:#000;font-family:'Liberation Sans', sans-serif;text-align:right;">400</div>
<div class="t" style="right:32.80px;top:628.74px;font-size:14.9px;line-height:20px;font-weight:bold;color:#000;font-family:'Liberation Sans', sans-serif;text-align:right;">128</div>
<div class="t" style="left:461.30px;top:653.58px;font-size:14.5px;line-height:20px;font-weight:normal;color:#2a2a2a;font-family:'Liberation Sans', sans-serif;">time</div>
<svg style="left:559px;top:654.5px" width="18" height="18" viewBox="0 0 18 18"><path d="M9 2.2 C8.6 2.2 8.3 2.4 8.1 2.8 L1.8 14.6 C1.4 15.3 1.9 16 2.6 16 H15.4 C16.1 16 16.6 15.3 16.2 14.6 L9.9 2.8 C9.7 2.4 9.4 2.2 9 2.2 Z" fill="none" stroke="#e6c03c" stroke-width="1.3"/><path d="M9 6.8 V11.3" stroke="#e6c03c" stroke-width="1.4"/><circle cx="9" cy="13.3" r="0.8" fill="#e6c03c"/></svg>
<div class="t" style="right:348.10px;top:653.44px;font-size:14.9px;line-height:20px;font-weight:normal;color:#2a2a2a;font-family:'Liberation Sans', sans-serif;text-align:right;transform:scaleX(0.928);transform-origin:right center;">0</div>
<div class="t" style="right:230.00px;top:653.44px;font-size:14.9px;line-height:20px;font-weight:normal;color:#2a2a2a;font-family:'Liberation Sans', sans-serif;text-align:right;transform:scaleX(0.928);transform-origin:right center;">136</div>
<div class="t" style="right:131.90px;top:653.44px;font-size:14.9px;line-height:20px;font-weight:normal;color:#2a2a2a;font-family:'Liberation Sans', sans-serif;text-align:right;transform:scaleX(0.928);transform-origin:right center;">136</div>
<div class="t" style="right:33.50px;top:653.44px;font-size:14.9px;line-height:20px;font-weight:normal;color:#2a2a2a;font-family:'Liberation Sans', sans-serif;text-align:right;transform:scaleX(0.928);transform-origin:right center;">0</div>
<div class="r" style="left:432px;top:678px;width:600px;height:2px;background:#e0e0e0;"></div>
<div class="t" style="left:461.30px;top:683.98px;font-size:14.5px;line-height:20px;font-weight:normal;color:#2a2a2a;font-family:'Liberation Sans', sans-serif;">id</div>
<svg style="left:559px;top:685px" width="18" height="18" viewBox="0 0 18 18"><path d="M9 2.2 C8.6 2.2 8.3 2.4 8.1 2.8 L1.8 14.6 C1.4 15.3 1.9 16 2.6 16 H15.4 C16.1 16 16.6 15.3 16.2 14.6 L9.9 2.8 C9.7 2.4 9.4 2.2 9 2.2 Z" fill="none" stroke="#e6c03c" stroke-width="1.3"/><path d="M9 6.8 V11.3" stroke="#e6c03c" stroke-width="1.4"/><circle cx="9" cy="13.3" r="0.8" fill="#e6c03c"/></svg>
<div class="t" style="right:348.10px;top:683.84px;font-size:14.9px;line-height:20px;font-weight:normal;color:#2a2a2a;font-family:'Liberation Sans', sans-serif;text-align:right;transform:scaleX(0.928);transform-origin:right center;">0</div>
<div class="t" style="right:230.00px;top:683.84px;font-size:14.9px;line-height:20px;font-weight:normal;color:#2a2a2a;font-family:'Liberation Sans', sans-serif;text-align:right;transform:scaleX(0.928);transform-origin:right center;">136</div>
<div class="t" style="right:131.90px;top:683.84px;font-size:14.9px;line-height:20px;font-weight:normal;color:#2a2a2a;font-family:'Liberation Sans', sans-serif;text-align:right;transform:scaleX(0.928);transform-origin:right center;">136</div>
<div class="t" style="right:33.50px;top:683.84px;font-size:14.9px;line-height:20px;font-weight:normal;color:#2a2a2a;font-family:'Liberation Sans', sans-serif;text-align:right;transform:scaleX(0.928);transform-origin:right center;">0</div>
<div class="r" style="left:432px;top:709px;width:600px;height:2px;background:#e0e0e0;"></div>
<div class="r" style="left:577.7px;top:173.2px;width:102.29999999999995px;height:3.5px;background:#fab03c"></div>
<div class="r" style="left:680px;top:173.2px;width:117.79999999999995px;height:3.5px;background:#1f86d6"></div>
<div class="r" style="left:795.5px;top:204px;width:2.2999999999999545px;height:2px;background:#1f86d6"></div>
<div class="r" style="left:577.7px;top:381.8px;width:102.29999999999995px;height:3.5px;background:#fab03c"></div>
<div class="r" style="left:680px;top:381.8px;width:117.79999999999995px;height:3.5px;background:#1f86d6"></div>
<div class="r" style="left:577.7px;top:499px;width:102.29999999999995px;height:3.5px;background:#fab03c"></div>
<div class="r" style="left:680px;top:499px;width:117.79999999999995px;height:3.5px;background:#1f86d6"></div>
<div class="r" style="left:678.4px;top:530px;width:1.0px;height:3.5px;background:#fab03c"></div>
<div class="r" style="left:736px;top:530px;width:61.799999999999955px;height:3.5px;background:#1f86d6"></div>
<div class="r" style="left:735.2px;top:677.7px;width:62.59999999999991px;height:3.5px;background:#1f86d6"></div>
<div class="r" style="left:735.2px;top:708.7px;width:62.59999999999991px;height:3.5px;background:#1f86d6"></div>
</body></html>
